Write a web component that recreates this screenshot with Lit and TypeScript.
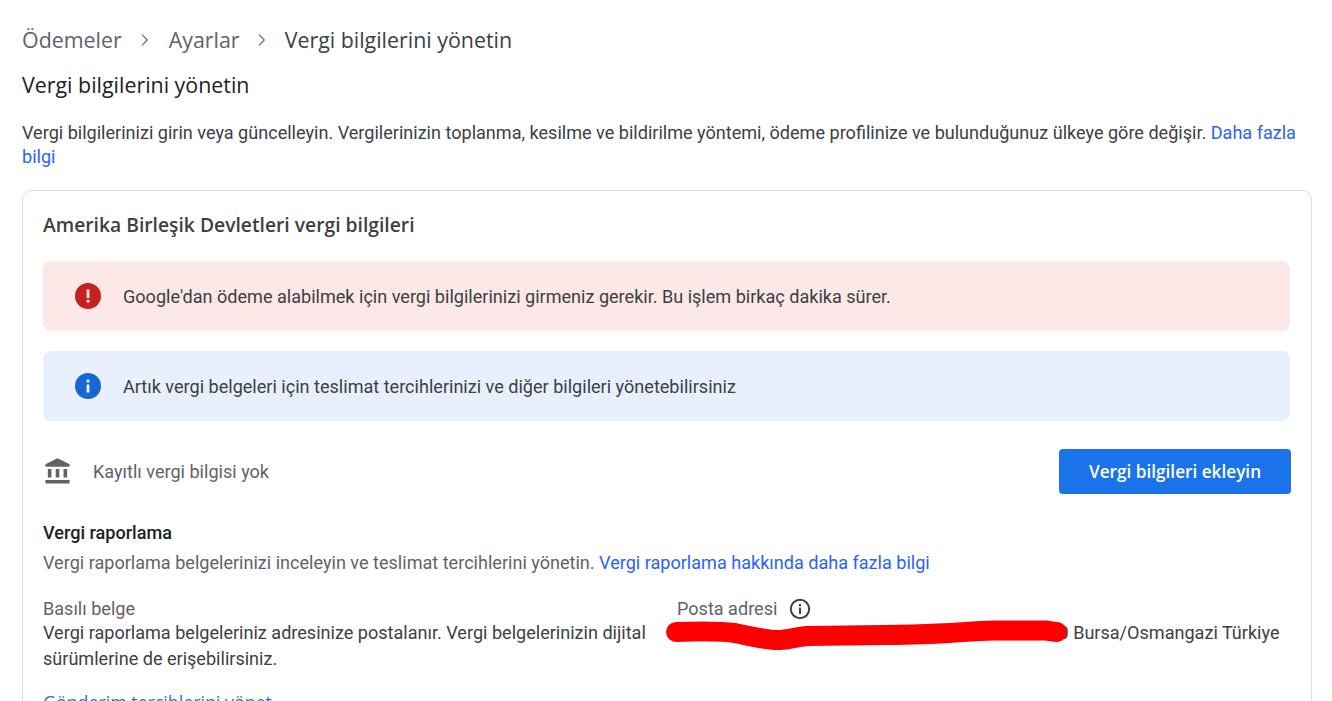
import { LitElement, html, css } from "lit";
import { customElement } from "lit/decorators.js";

@customElement("app-root")
export class AppRoot extends LitElement {
  static styles = css`
    :host {
      display: block;
      height: 701px;
      overflow: hidden;
      background: #fff;
      font-family: Roboto, "Liberation Sans", sans-serif;
      font-size: 18.07px;
      line-height: 24px;
      color: #3c4043;
    }
    .page { padding: 28px 20px 0 22px; }
    a { color: #2962ff; text-decoration: none; }
    .crumbs {
      display: flex;
      align-items: center;
      height: 24px;
      font-family: "Open Sans", sans-serif;
      font-size: 21.4px;
      color: #5f6368;
    }
    .crumbs .cur { color: #3c4043; }
    .crumbs svg { margin: 0 19.5px; display: block; }
    .crumbs svg:last-of-type { margin: 0 18.5px; }
    h1 {
      margin: 20px 0 0;
      font-family: "Open Sans", sans-serif;
      font-weight: 400;
      font-size: 21.4px;
      line-height: 26px;
      color: #202124;
    }
    .intro { margin: 23px 0 0; height: 47px; }
    .card {
      margin-top: 22px;
      border: 1px solid #dadce0;
      border-radius: 10px;
      padding: 20px 21px 40px 20px;
    }
    h2 {
      margin: 0;
      font-family: "Open Sans", sans-serif;
      font-weight: 560;
      font-size: 19.3px;
      line-height: 28px;
      color: #3c4043;
    }
    .banner {
      display: flex;
      align-items: center;
      gap: 22px;
      height: 70px;
      padding-left: 32px;
      border-radius: 8px;
      color: #3c4043;
    }
    .banner svg { display: block; flex: none; }
    .banner span { margin-top: 2px; }
    .err { margin-top: 22px; background: #fce8e6; }
    .inf { margin-top: 20px; background: #e8f0fe; }
    .status {
      display: flex;
      align-items: center;
      justify-content: space-between;
      margin-top: 28px;
      height: 45px;
    }
    .status .left { display: flex; align-items: center; gap: 21px; color: #5f6368; }
    .status svg { display: block; }
    button {
      width: 232px;
      height: 45px;
      margin-right: -1px;
      border: 0;
      border-radius: 4px;
      background: #1a73e8;
      color: #fff;
      font-family: "Open Sans", sans-serif;
      font-weight: 600;
      font-size: 17.2px;
    }
    .report { margin-top: 27px; }
    .report h3 {
      margin: 0;
      font-weight: 500;
      font-size: 18.07px;
      line-height: 24px;
      color: #202124;
    }
    .report p { margin: 6px 0 0; color: #5f6368; }
    .cols {
      display: grid;
      grid-template-columns: 604px 1fr;
      column-gap: 30px;
      margin-top: 22px;
    }
    .label { color: #5f6368; display: flex; align-items: center; gap: 12px; }
    .body { color: #3c4043; line-height: 26px; margin-top: -1px; }
    .addr { position: relative; white-space: nowrap; }
    .addr .hidden { display: inline-block; width: 381.5px; }
    .scribble { position: absolute; left: -17px; top: -10px; display: block; }
    .more {
      display: block;
      margin-top: 18px;
      color: #1a73e8;
      font-family: "Open Sans", sans-serif;
      font-weight: 500;
      font-size: 17.8px;
    }
  `;

  render() {
    const chev = html`<svg width="8" height="12" viewBox="0 0 8 12"><path d="M1 .7 6.3 6 1 11.3" fill="none" stroke="#5f6368" stroke-width="1.1"/></svg>`;
    return html`<div class="page">
      <nav class="crumbs">
        <span>Ödemeler</span>${chev}<span>Ayarlar</span>${chev}<span class="cur">Vergi bilgilerini yönetin</span>
      </nav>
      <h1>Vergi bilgilerini yönetin</h1>
      <p class="intro">Vergi bilgilerinizi girin veya güncelleyin. Vergilerinizin toplanma, kesilme ve bildirilme yöntemi, ödeme profilinize ve bulunduğunuz ülkeye göre değişir. <a href="#">Daha fazla bilgi</a></p>
      <section class="card">
        <h2>Amerika Birleşik Devletleri vergi bilgileri</h2>
        <div class="banner err">
          <svg width="26" height="26" viewBox="0 0 26 26"><circle cx="13" cy="13" r="13" fill="#c5221f"/><rect x="11.6" y="6.5" width="2.8" height="8.5" fill="#fce8e6"/><rect x="11.6" y="16.7" width="2.8" height="2.8" fill="#fce8e6"/></svg>
          <span>Google'dan ödeme alabilmek için vergi bilgilerinizi girmeniz gerekir. Bu işlem birkaç dakika sürer.</span>
        </div>
        <div class="banner inf">
          <svg width="26" height="26" viewBox="0 0 26 26"><circle cx="13" cy="13" r="13" fill="#1967d2"/><rect x="11.6" y="11.5" width="2.8" height="8" fill="#e8f0fe"/><rect x="11.6" y="6.7" width="2.8" height="2.8" fill="#e8f0fe"/></svg>
          <span>Artık vergi belgeleri için teslimat tercihlerinizi ve diğer bilgileri yönetebilirsiniz</span>
        </div>
        <div class="status">
          <div class="left">
            <svg width="29" height="29" viewBox="0 0 24 24" fill="#5f6368"><path d="M4 10h3v7H4zm6.5 0h3v7h-3zM2 19h20v3H2zm15-9h3v7h-3zM12 1 2 6v2h20V6z"/></svg>
            <span>Kayıtlı vergi bilgisi yok</span>
          </div>
          <button>Vergi bilgileri ekleyin</button>
        </div>
        <div class="report">
          <h3>Vergi raporlama</h3>
          <p>Vergi raporlama belgelerinizi inceleyin ve teslimat tercihlerini yönetin. <a href="#">Vergi raporlama hakkında daha fazla bilgi</a></p>
          <div class="cols">
            <div>
              <div class="label">Basılı belge</div>
              <div class="body">Vergi raporlama belgeleriniz adresinize postalanır. Vergi belgelerinizin dijital sürümlerine de erişebilirsiniz.</div>
            </div>
            <div>
              <div class="label">Posta adresi
                <svg width="22" height="22" viewBox="0 0 22 22"><circle cx="11" cy="11" r="9.2" fill="none" stroke="#3c4043" stroke-width="2"/><rect x="10" y="9.6" width="2" height="6.4" fill="#3c4043"/><rect x="10" y="6" width="2" height="2.2" fill="#3c4043"/></svg>
              </div>
              <div class="body addr"><span class="hidden"></span>0 Bursa/Osmangazi Türkiye
                <svg class="scribble" width="420" height="50" viewBox="0 0 420 50"><path d="M16 22 C40 21 60 21 75 23 C90 26 105 30 117 30 C128 30 135 27 147 26 L223 25 C250 25 270 24 290 23 C305 22 320 20.5 333 20.5 L385 20.5 C390 21 395 22 397 22" fill="none" stroke="#ff0000" stroke-width="20" stroke-linecap="round" stroke-linejoin="round"/></svg>
              </div>
            </div>
          </div>
          <a class="more" href="#">Gönderim tercihlerini yönet</a>
        </div>
      </section>
    </div>`;
  }
}
